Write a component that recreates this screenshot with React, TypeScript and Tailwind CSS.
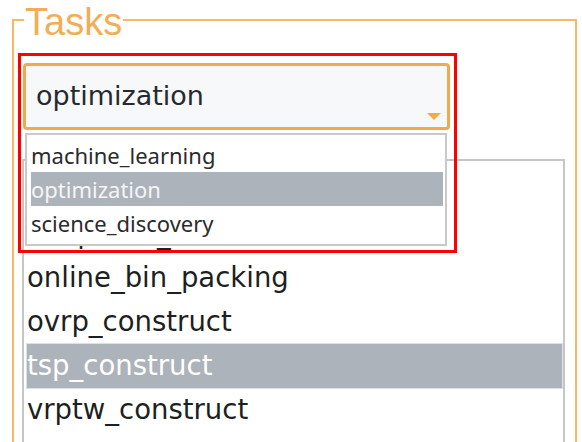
const tasks = [
  'cvrp_construct',
  'knapsack_construct',
  'online_bin_packing',
  'ovrp_construct',
  'tsp_construct',
  'vrptw_construct',
]

const categories = ['machine_learning', 'optimization', 'science_discovery']

export default function App() {
  const selectedTask = 'tsp_construct'
  const selectedCategory = 'optimization'

  return (
    <div className="w-[582px] h-[442px] overflow-hidden bg-white">
      <fieldset className="ml-[12px] w-[565px] h-[480px] border-2 border-[#f5b867]">
        <legend className="ml-[10px] px-[1px] h-[40px] text-[38px] leading-[44px] text-[#f2ae57] font-['Liberation_Sans',sans-serif]">
          Tasks
        </legend>

        {/* category select, opened */}
        <div className="relative ml-[9px] mt-[23px] w-[427px]">
          <div className="flex justify-between h-[67px] rounded-[4px] border-[3px] border-[#f2a94c] bg-[#f7f8fa] pl-[10px] pr-[6px]">
            <span className="self-center text-[27px] text-[#262a30] font-['DejaVu_Sans',sans-serif]">
              {selectedCategory}
            </span>
            <svg width="14" height="7" viewBox="0 0 14 7" className="self-end mb-[7px]">
              <polygon points="0,0 14,0 7,7" fill="#f2a94c" />
            </svg>
          </div>

          <div className="absolute left-[2px] top-[70px] w-[422px] h-[113px] border-2 border-[#c9c9c9] bg-white pt-[3px] z-10">
            {categories.map((c) => (
              <div
                key={c}
                className={`h-[34px] ml-[4px] mr-[2px] flex items-center text-[22px] font-['Noto_Sans',sans-serif] ${
                  c === selectedCategory ? 'bg-[#adb3ba] text-[#f4f5f7]' : 'text-[#2b2b2b]'
                }`}
              >
                {c}
              </div>
            ))}
          </div>

          <div className="absolute left-[-5px] top-[-10px] w-[439px] h-[200px] border-[3px] border-[#ff0000] z-20 pointer-events-none" />
        </div>

        {/* task list */}
        <div className="ml-[8px] mt-[29px] w-[543px] h-[300px] border-2 border-[#c6c6c6] bg-white pt-[7px]">
          {tasks.map((t) => (
            <div
              key={t}
              className={`h-[44px] ml-[3px] mr-[1px] flex items-center text-[27.5px] font-['DejaVu_Sans',sans-serif] ${
                t === selectedTask
                  ? 'bg-[#adb3bb] text-white outline outline-1 outline-[#dde1e6]'
                  : 'text-[#1d1f22]'
              }`}
            >
              {t}
            </div>
          ))}
        </div>
      </fieldset>
    </div>
  )
}
